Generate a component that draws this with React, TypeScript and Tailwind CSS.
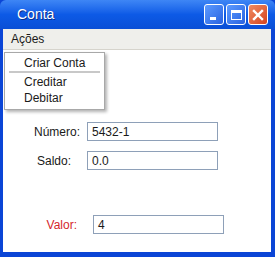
export default function App() {
  return (
    <div className="w-[275px] h-[257px] flex flex-col bg-[#0b45d6] font-['Liberation_Sans',Arial,sans-serif] text-[12px] text-[#1a1a1a]">
      <div className="h-[29px] shrink-0 flex items-center pl-[17px] pr-[7px] rounded-t-[6px] bg-gradient-to-b from-[#3e86f5] via-[#0d5ae6] to-[#0a4fd6]">
        <span className="text-white text-[14px] [text-shadow:1px_1px_0_#0a2f8a]">Conta</span>
        <div className="ml-auto flex gap-[2px]">
          <div className="w-[20px] h-[21px] rounded-[3px] border border-white bg-gradient-to-br from-[#5d9bff] to-[#2a62e0] flex items-end justify-start pl-[5px] pb-[4px]">
            <div className="w-[6px] h-[3px] bg-white" />
          </div>
          <div className="w-[20px] h-[21px] rounded-[3px] border border-white bg-gradient-to-br from-[#5d9bff] to-[#2a62e0] flex items-center justify-center">
            <div className="w-[11px] h-[10px] border border-white border-t-[3px]" />
          </div>
          <div className="w-[20px] h-[21px] rounded-[3px] border border-white bg-gradient-to-br from-[#f08a60] to-[#d4421c] flex items-center justify-center">
            <svg width="12" height="12" viewBox="0 0 12 12">
              <path d="M2 2 L10 10 M10 2 L2 10" stroke="white" strokeWidth="2.4" strokeLinecap="square" />
            </svg>
          </div>
        </div>
      </div>
      <div className="flex-1 flex flex-col border-l-[3px] border-r-[4px] border-b-[5px] border-[#0b45d6] relative">
        <div className="h-[21px] shrink-0 bg-[#efefeb] border-b border-[#d6d4cc] flex items-center pl-[8px]">
          <span>Ações</span>
        </div>
        <div className="flex-1 bg-white flex flex-col pt-[72px]">
          <div className="flex items-center h-[19px]">
            <span className="w-[84px] text-right pr-[7px]">Número:</span>
            <div className="w-[131px] h-[19px] border border-[#8ea0b8] flex items-center pl-[4px]">5432-1</div>
          </div>
          <div className="flex items-center h-[19px] mt-[10px]">
            <span className="w-[84px] text-right pr-[16px]">Saldo:</span>
            <div className="w-[131px] h-[19px] border border-[#8ea0b8] flex items-center pl-[4px]">0.0</div>
          </div>
          <div className="flex items-center h-[19px] mt-[45px]">
            <span className="w-[90px] text-right pr-[16px] text-[#d4262c]">Valor:</span>
            <div className="w-[131px] h-[19px] border border-[#8ea0b8] flex items-center pl-[4px]">4</div>
          </div>
        </div>
        <div className="absolute left-[1px] top-[23px] w-[101px] bg-white border border-[#a8a8a8] shadow-[2px_2px_3px_rgba(0,0,0,0.3)] pt-[2px] pb-[3px]">
          <div className="h-[15px] flex items-center pl-[19px]">Criar Conta</div>
          <div className="mx-[4px] my-[1px] h-[2px] bg-[#c8c8c8]" />
          <div className="h-[16px] flex items-center pl-[19px]">Creditar</div>
          <div className="h-[16px] flex items-center pl-[19px]">Debitar</div>
        </div>
      </div>
    </div>
  );
}
